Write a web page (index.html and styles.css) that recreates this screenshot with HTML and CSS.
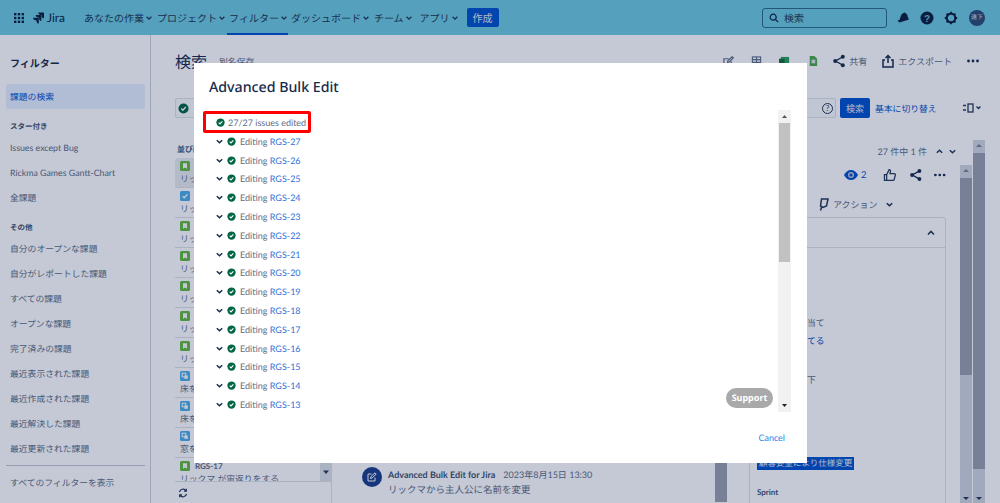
FILE: index.html
```html
<!DOCTYPE html>
<html lang="ja">
<head>
  <meta charset="UTF-8" />
  <title>検索 - Jira</title>
  <link rel="stylesheet" href="styles.css">
</head>
<body>
  <svg class="sprite" aria-hidden="true">
    <symbol id="ok" viewBox="0 0 12 12">
      <circle cx="6" cy="6" r="5.5" fill="#006644"/>
      <path d="M3.6 6.1l1.7 1.7 3.2-3.4" fill="none" stroke="#fff" stroke-width="1.5"/>
    </symbol>
    <symbol id="down" viewBox="0 0 10 10">
      <path d="M2 3.5l3 3 3-3" fill="none" stroke="currentColor" stroke-width="1.6"/>
    </symbol>
    <symbol id="up" viewBox="0 0 10 10">
      <path d="M2 6.5l3-3 3 3" fill="none" stroke="currentColor" stroke-width="1.6"/>
    </symbol>
    <symbol id="story" viewBox="0 0 10 10">
      <rect width="10" height="10" rx="1.5" fill="#63ba3c"/>
      <path d="M3 2.2h4v5.6L5 6.4 3 7.8z" fill="#fff"/>
    </symbol>
    <symbol id="task" viewBox="0 0 10 10">
      <rect width="10" height="10" rx="1.5" fill="#4bade8"/>
      <path d="M2.6 5.2l1.7 1.6 3.1-3.4" fill="none" stroke="#fff" stroke-width="1.4"/>
    </symbol>
    <symbol id="sub" viewBox="0 0 10 10">
      <rect width="10" height="10" rx="1.5" fill="#4bade8"/>
      <rect x="2.2" y="2.2" width="3.6" height="3.6" fill="none" stroke="#fff" stroke-width="1"/>
      <rect x="4.4" y="4.4" width="3.4" height="3.4" fill="#fff"/>
    </symbol>
    <symbol id="share" viewBox="0 0 14 14">
      <path d="M10.5 3L3.5 7l7 4" fill="none" stroke="currentColor" stroke-width="1.4"/>
      <circle cx="10.8" cy="2.8" r="2" fill="currentColor"/>
      <circle cx="3.2" cy="7" r="2" fill="currentColor"/>
      <circle cx="10.8" cy="11.2" r="2" fill="currentColor"/>
    </symbol>
    <symbol id="more" viewBox="0 0 14 14">
      <circle cx="2.5" cy="7" r="1.4" fill="currentColor"/>
      <circle cx="7" cy="7" r="1.4" fill="currentColor"/>
      <circle cx="11.5" cy="7" r="1.4" fill="currentColor"/>
    </symbol>
  </svg>

  <header class="nav">
    <svg class="nav-grid" width="10" height="10" viewBox="0 0 10 10" fill="#0b1f3f">
      <rect width="2.4" height="2.4"/><rect x="3.8" width="2.4" height="2.4"/><rect x="7.6" width="2.4" height="2.4"/>
      <rect y="3.8" width="2.4" height="2.4"/><rect x="3.8" y="3.8" width="2.4" height="2.4"/><rect x="7.6" y="3.8" width="2.4" height="2.4"/>
      <rect y="7.6" width="2.4" height="2.4"/><rect x="3.8" y="7.6" width="2.4" height="2.4"/><rect x="7.6" y="7.6" width="2.4" height="2.4"/>
    </svg>
    <div class="logo">
      <svg width="12" height="12" viewBox="0 0 12 12" fill="#0b1f3f">
        <path d="M11.5.5H6.3c0 1.4 1.1 2.4 2.4 2.4h1v1c0 1.3 1 2.4 2.3 2.4V.9z"/>
        <path d="M8.9 3.1H3.7c0 1.4 1.1 2.4 2.4 2.4h1v1c0 1.3 1 2.4 2.3 2.4V3.5z"/>
        <path d="M6.3 5.8H1.1c0 1.4 1.1 2.4 2.4 2.4h1v1c0 1.3 1 2.4 2.3 2.4V6.2z"/>
      </svg>
      <span>Jira</span>
    </div>
    <nav class="menu">
      <a>あなたの作業<svg><use href="#down"/></svg></a>
      <a>プロジェクト<svg><use href="#down"/></svg></a>
      <a class="current">フィルター<svg><use href="#down"/></svg></a>
      <a>ダッシュボード<svg><use href="#down"/></svg></a>
      <a>チーム<svg><use href="#down"/></svg></a>
      <a>アプリ<svg><use href="#down"/></svg></a>
    </nav>
    <button class="create">作成</button>
    <div class="nav-right">
      <div class="global-search">
        <svg width="10" height="10" viewBox="0 0 10 10" fill="none" stroke="#0b1f3f" stroke-width="1.2"><circle cx="4.2" cy="4.2" r="3"/><path d="M6.5 6.5L9.2 9.2"/></svg>
        <span>検索</span>
      </div>
      <svg class="nav-icon" viewBox="0 0 14 14" fill="#0b1f3f"><path d="M8.5 1.5c2 .8 3.2 2.3 3.2 4.3l1.3 2.7-9.5 3L1.5 9.8l2.3-1.4C4.5 5.5 5.500 2.200 8.500 1.500z"/></svg>
      <svg class="nav-icon" viewBox="0 0 14 14"><circle cx="7" cy="7" r="6.5" fill="#0b1f3f"/><text x="7" y="10.5" text-anchor="middle" font-family="Liberation Sans" font-weight="bold" font-size="10" fill="#6fb0c6">?</text></svg>
      <svg class="nav-icon" viewBox="0 0 14 14" fill="none" stroke="#0b1f3f"><circle cx="7" cy="7" r="4.3" stroke-width="2.2"/><path d="M7 .8v2M7 11.2v2M.8 7h2M11.2 7h2M2.6 2.6L4 4M10 10l1.4 1.4M2.6 11.4L4 10M10 4l1.4-1.4" stroke-width="1.8"/></svg>
      <div class="avatar">遠下</div>
    </div>
  </header>

  <div class="page">
    <aside class="side">
      <h3 class="side-title">フィルター</h3>
      <a class="side-item selected">課題の検索</a>
      <h4 class="side-head">スター付き</h4>
      <a class="side-item">Issues except Bug</a>
      <a class="side-item">Rickma Games Gantt-Chart</a>
      <a class="side-item">全課題</a>
      <h4 class="side-head other">その他</h4>
      <a class="side-item">自分のオープンな課題</a>
      <a class="side-item">自分がレポートした課題</a>
      <a class="side-item">すべての課題</a>
      <a class="side-item">オープンな課題</a>
      <a class="side-item">完了済みの課題</a>
      <a class="side-item">最近表示された課題</a>
      <a class="side-item">最近作成された課題</a>
      <a class="side-item">最近解決した課題</a>
      <a class="side-item">最近更新された課題</a>
      <div class="side-rule"></div>
      <a class="side-item">すべてのフィルターを表示</a>
    </aside>

    <main class="main">
      <div class="title-row">
        <h1>検索</h1>
        <span class="save-as">別名保存</span>
        <div class="tools">
          <svg class="tool-icon" viewBox="0 0 12 12" fill="none" stroke="#5e6c84" stroke-width="1.3"><path d="M9 6v5H1V3h5M5 7l.4-2L10 .8 11.2 2 7 6.5z"/></svg>
          <svg class="tool-icon" viewBox="0 0 12 12" fill="none" stroke="#5e6c84" stroke-width="1.2"><rect x="1.5" y="1" width="9" height="10"/><path d="M1.5 4h9M1.5 7h9M6 1v10"/></svg>
          <svg class="tool-icon" viewBox="0 0 12 12"><rect x="2" y="1" width="9" height="10" fill="#2e9e5b"/><rect x="0" y="3" width="6" height="6" fill="#146c3a"/></svg>
          <svg class="tool-icon" viewBox="0 0 12 12"><path d="M3 0h5l3 3v8H3z" fill="#4aa84a"/><rect x="5" y="4" width="4" height="4" fill="#dfe6ee"/></svg>
          <span class="tool"><svg><use href="#share"/></svg>共有</span>
          <span class="tool"><svg viewBox="0 0 14 14" fill="none" stroke="currentColor" stroke-width="1.5"><path d="M4 6H2v7h10V6h-2M7 9V1.5M4.5 4L7 1.5 9.5 4"/></svg>エクスポート</span>
          <svg class="tool-more"><use href="#more"/></svg>
        </div>
      </div>

      <div class="search-row">
        <div class="jql">
          <svg width="11" height="11"><use href="#ok"/></svg>
          <span class="jql-help">?</span>
        </div>
        <button class="search-btn">検索</button>
        <a class="switch">基本に切り替え</a>
        <svg class="layout" width="20" height="10" viewBox="0 0 20 10" fill="none" stroke="#253858" stroke-width="1.3"><path d="M0 2.5h3M0 7h3"/><rect x="5" y="1" width="5" height="8"/><path d="M13.5 3.5l2 2 2-2"/></svg>
      </div>

      <div class="content">
        <section class="list">
          <div class="sort">並び順</div>
          <div class="issues">
            <div class="issue active"><svg><use href="#story"/></svg><p>リックマ</p></div>
            <div class="issue"><svg><use href="#task"/></svg><p>リックマ</p></div>
            <div class="issue"><svg><use href="#story"/></svg><p>リックマ</p></div>
            <div class="issue"><svg><use href="#story"/></svg><p>リックマ</p></div>
            <div class="issue"><svg><use href="#story"/></svg><p>リックマ</p></div>
            <div class="issue"><svg><use href="#story"/></svg><p>リックマ</p></div>
            <div class="issue"><svg><use href="#story"/></svg><p>リックマ</p></div>
            <div class="issue"><svg><use href="#sub"/></svg><p>床を</p></div>
            <div class="issue"><svg><use href="#sub"/></svg><p>床を</p></div>
            <div class="issue"><svg><use href="#sub"/></svg><p>窓を</p></div>
            <div class="issue"><svg><use href="#story"/></svg><b>RGS-17</b><p>リックマ が宙返りをする</p></div>
            <div class="list-scroll">
              <svg width="8" height="6" viewBox="0 0 8 6"><path d="M1 1.5h6L4 5z" fill="#253858"/></svg>
            </div>
          </div>
          <div class="list-foot">
            <svg width="10" height="10" viewBox="0 0 10 10" fill="none" stroke="#253858" stroke-width="1.2"><path d="M1.5 4A3.6 3.6 0 0 1 8 2.8M8.5 6A3.6 3.6 0 0 1 2 7.2M8.3 .8v2.4H6M1.7 9.2V6.8H4"/></svg>
          </div>
        </section>

        <section class="activity">
          <div class="comment">
            <div class="comment-avatar">
              <svg width="10" height="10" viewBox="0 0 10 10" fill="none" stroke="#fff" stroke-width="1"><path d="M8 5.5V9H1V2h3.5M3.5 6.500l.4-1.900L8 .8l1.200 1.200L5.200 6z"/></svg>
            </div>
            <div>
              <div class="comment-meta"><b>Advanced Bulk Edit for Jira</b><span>2023年8月15日 13:30</span></div>
              <div class="comment-text">リックマから主人公に名前を変更</div>
            </div>
          </div>
          <div class="mid-scroll"></div>
        </section>

        <section class="detail">
          <div class="pager">27 件中 1 件<svg><use href="#up"/></svg><svg><use href="#down"/></svg></div>
          <div class="actions">
            <span class="watch">
              <svg width="14" height="10" viewBox="0 0 14 10"><path d="M0 5c1.5-3 4-5 7-5s5.500 2 7 5c-1.500 3-4 5-7 5S1.500 8 0 5z" fill="#0052cc"/><circle cx="7" cy="5" r="3" fill="#c3c8d4"/><circle cx="7" cy="5" r="1.6" fill="#0052cc"/></svg>
              2
            </span>
            <svg class="act thumb" viewBox="0 0 14 14" fill="none" stroke="#253858" stroke-width="1.3"><path d="M1.5 6.5h2.3v6H1.5zM3.8 6.8l2.5-5.300c1.200 0 1.700.9 1.400 2L7.200 5.500h4.600c.8 0 1.200.7 1 1.400l-1.100 4.500c-.2.700-.6 1.100-1.300 1.100H3.800"/></svg>
            <svg class="act"><use href="#share"/></svg>
            <svg class="act dots"><use href="#more"/></svg>
          </div>
          <div class="action-row">
            <svg width="11" height="13" viewBox="0 0 11 13" fill="none" stroke="#253858" stroke-width="1.5"><path d="M3.5 1H10L8.5 8 5 9.5 2.500 8zM3.500 9.500L2.500 12.500"/></svg>
            <span>アクション</span>
            <svg class="chev"><use href="#down"/></svg>
          </div>
          <div class="panel">
            <div class="panel-head"><svg><use href="#up"/></svg></div>
            <div class="panel-body">
              <p class="line-a">当て</p>
              <p class="line-b">てる</p>
              <p class="line-c">下</p>
              <span class="tag">顧客要望により仕様変更</span>
              <h5>Sprint</h5>
            </div>
          </div>
        </section>

        <div class="scroll panel-scroll"><span class="scroll-thumb"></span></div>
        <div class="scroll page-scroll"><span class="scroll-thumb"></span></div>
      </div>
    </main>
  </div>

  <div class="overlay"></div>

  <div class="dialog">
    <h2>Advanced Bulk Edit</h2>
    <div class="dialog-body">
      <div class="log">
        <div class="log-total"><svg><use href="#ok"/></svg>27/27 issues edited</div>
        <div class="log-row"><svg class="chev"><use href="#down"/></svg><svg class="ok"><use href="#ok"/></svg>Editing <a>RGS-27</a></div>
        <div class="log-row"><svg class="chev"><use href="#down"/></svg><svg class="ok"><use href="#ok"/></svg>Editing <a>RGS-26</a></div>
        <div class="log-row"><svg class="chev"><use href="#down"/></svg><svg class="ok"><use href="#ok"/></svg>Editing <a>RGS-25</a></div>
        <div class="log-row"><svg class="chev"><use href="#down"/></svg><svg class="ok"><use href="#ok"/></svg>Editing <a>RGS-24</a></div>
        <div class="log-row"><svg class="chev"><use href="#down"/></svg><svg class="ok"><use href="#ok"/></svg>Editing <a>RGS-23</a></div>
        <div class="log-row"><svg class="chev"><use href="#down"/></svg><svg class="ok"><use href="#ok"/></svg>Editing <a>RGS-22</a></div>
        <div class="log-row"><svg class="chev"><use href="#down"/></svg><svg class="ok"><use href="#ok"/></svg>Editing <a>RGS-21</a></div>
        <div class="log-row"><svg class="chev"><use href="#down"/></svg><svg class="ok"><use href="#ok"/></svg>Editing <a>RGS-20</a></div>
        <div class="log-row"><svg class="chev"><use href="#down"/></svg><svg class="ok"><use href="#ok"/></svg>Editing <a>RGS-19</a></div>
        <div class="log-row"><svg class="chev"><use href="#down"/></svg><svg class="ok"><use href="#ok"/></svg>Editing <a>RGS-18</a></div>
        <div class="log-row"><svg class="chev"><use href="#down"/></svg><svg class="ok"><use href="#ok"/></svg>Editing <a>RGS-17</a></div>
        <div class="log-row"><svg class="chev"><use href="#down"/></svg><svg class="ok"><use href="#ok"/></svg>Editing <a>RGS-16</a></div>
        <div class="log-row"><svg class="chev"><use href="#down"/></svg><svg class="ok"><use href="#ok"/></svg>Editing <a>RGS-15</a></div>
        <div class="log-row"><svg class="chev"><use href="#down"/></svg><svg class="ok"><use href="#ok"/></svg>Editing <a>RGS-14</a></div>
        <div class="log-row"><svg class="chev"><use href="#down"/></svg><svg class="ok"><use href="#ok"/></svg>Editing <a>RGS-13</a></div>
      </div>
      <div class="log-scroll">
        <svg width="13" height="13" viewBox="0 0 13 13"><path d="M4 8h5L6.5 5z" fill="#555"/></svg>
        <span class="log-thumb"></span>
        <span class="log-track"></span>
        <svg width="13" height="13" viewBox="0 0 13 13"><path d="M4 5h5L6.5 8z" fill="#222"/></svg>
      </div>
      <span class="highlight"></span>
      <span class="support">Support</span>
    </div>
    <div class="dialog-foot"><a>Cancel</a></div>
  </div>
</body>
</html>
```

FILE: styles.css
```css
* { box-sizing: border-box; }
html, body {
  margin: 0;
  height: 503px;
  overflow: hidden;
}
body {
  position: relative;
  background: #fff;
  color: #5e6c84;
  font-family: Lato, "Noto Sans CJK JP", sans-serif;
  font-size: 8.8px;
  text-rendering: geometricPrecision;
}
h1, h2, h3, h4, h5, p { margin: 0; font-weight: normal; }
.sprite { display: none; }

/* top bar */
.nav {
  display: flex;
  align-items: center;
  height: 35px;
  padding-left: 14px;
  background: #6ecadf;
  color: #1c3550;
  font-size: 10px;
}
.logo {
  display: flex;
  align-items: center;
  gap: 3px;
  margin-left: 8px;
  font-size: 12px;
  color: #0b1f3f;
}
.menu {
  display: flex;
  height: 35px;
  margin-left: 19px;
  gap: 4px;
}
.menu a {
  display: flex;
  align-items: center;
  padding-top: 2px;
  border-bottom: 2px solid transparent;
}
.menu svg { width: 8px; height: 8px; margin-left: 1px; }
.menu .current { border-bottom-color: #0052cc; padding-left: 2px; margin: 0 -1px 0 -3px; }
.menu a:last-child { margin-left: 3px; }
.create {
  flex: none;
  width: 32px;
  height: 19px;
  margin-left: 8px;
  padding: 0;
  border: 0;
  border-radius: 2px;
  background: #0052cc;
  color: #e4e9f2;
  font: 10px "Noto Sans CJK JP", sans-serif;
}
.nav-right {
  display: flex;
  align-items: center;
  margin-left: auto;
  padding-right: 15px;
}
.global-search {
  display: flex;
  align-items: center;
  gap: 5px;
  width: 125px;
  height: 20px;
  padding-left: 6px;
  margin-right: 9px;
  border: 1px solid #2c6a84;
  border-radius: 3px;
}
.nav-icon { width: 14px; height: 14px; margin-left: 10px; }
.global-search + .nav-icon { margin-left: 0; }
.avatar {
  width: 16px;
  height: 16px;
  margin-left: 11px;
  border-radius: 50%;
  background: #2c4a75;
  color: #dfe5ee;
  font-size: 6px;
  line-height: 16px;
  text-align: center;
}

.page {
  display: flex;
  height: 468px;
  overflow: hidden;
}

/* left sidebar */
.side {
  flex: none;
  width: 151px;
  padding: 20px 5px 0 6px;
  border-right: 1px solid #ccd1da;
}
.side-title {
  padding-left: 4px;
  height: 29px;
  font-size: 10px;
  font-weight: bold;
  color: #172b4d;
}
.side-item {
  display: flex;
  align-items: center;
  height: 25px;
  padding-left: 4px;
  white-space: nowrap;
}
.side-item.selected {
  background: #e6eeff;
  border-radius: 3px;
  color: #0052cc;
}
.side-head {
  height: 14px;
  margin-top: 12px;
  padding-left: 4px;
  font-size: 7.5px;
  font-weight: bold;
  color: #42526e;
}
.side-rule {
  margin-top: 4px;
  margin-bottom: 4px;
  border-top: 1px solid #c1c7d0;
}

/* main area */
.main {
  flex: 1;
  min-width: 0;
  padding: 13px 0 0 24px;
}
.title-row {
  display: flex;
  align-items: center;
  height: 26px;
}
.title-row h1 {
  font-size: 16px;
  color: #172b4d;
}
.save-as { margin-left: 12px; }
.tools {
  display: flex;
  align-items: center;
  margin-left: auto;
  padding-right: 20px;
  font-size: 9px;
}
.tool { display: flex; align-items: center; gap: 3px; margin-left: 14px; }
.tool svg { width: 14px; height: 14px; color: #172b4d; }
.tool-more { width: 14px; height: 14px; margin-left: 14px; color: #172b4d; }
.tool-icon { width: 11px; height: 11px; margin-left: 17px; }

.search-row {
  display: flex;
  align-items: center;
  height: 20px;
  margin-top: 24px;
}
.jql {
  display: flex;
  align-items: center;
  justify-content: space-between;
  flex: none;
  width: 661px;
  height: 20px;
  padding: 0 2px;
  border: 1px solid #dfe1e6;
  border-radius: 2px;
  background: #fafbfc;
}
.jql-help {
  width: 11px;
  height: 11px;
  border: 1.2px solid #253858;
  border-radius: 50%;
  font-size: 8px;
  line-height: 9px;
  text-align: center;
  color: #253858;
}
.search-btn {
  flex: none;
  width: 30px;
  height: 20px;
  margin-left: 4px;
  padding: 0;
  border: 0;
  border-radius: 2px;
  background: #0052cc;
  color: #e4e9f2;
  font: 9px "Noto Sans CJK JP", sans-serif;
}
.switch { margin-left: 5px; color: #0052cc; white-space: nowrap; }
.layout { margin-left: 26px; }

.content {
  display: flex;
  height: 385px;
  margin-top: 22px;
}

/* issue list */
.list {
  flex: none;
  width: 157px;
}
.sort {
  height: 18px;
  padding-left: 2px;
  font-size: 8px;
  font-weight: bold;
  line-height: 18px;
  color: #42526e;
}
.issues { position: relative; height: 323px; overflow: hidden; }
.issue {
  height: 30px;
  padding: 3px 5px 0;
  border-bottom: 1px solid #dfe1e6;
  white-space: nowrap;
  line-height: 10px;
}
.issue svg { display: inline-block; width: 10px; height: 10px; vertical-align: top; }
.issue b { margin-left: 5px; font-size: 8px; vertical-align: top; }
.issue p { height: 14px; line-height: 14px; margin-top: 1px; overflow: hidden; }
.issue.active { background: #ebecf0; border-radius: 3px; }
.list-scroll {
  position: absolute;
  right: 0;
  bottom: 0;
  display: flex;
  justify-content: center;
  align-items: center;
  width: 12px;
  height: 19px;
  background: #dfe1e6;
}
.list-foot {
  height: 22px;
  padding: 6px 0 0 3px;
  border-top: 1px solid #dfe1e6;
  border-right: 1px solid #dfe1e6;
}

/* activity behind the dialog */
.activity {
  position: relative;
  flex: none;
  width: 395px;
  padding-left: 30px;
}
.comment {
  display: flex;
  gap: 6px;
  margin-top: 328px;
}
.comment-avatar {
  display: flex;
  justify-content: center;
  align-items: center;
  width: 20px;
  height: 20px;
  margin-top: -1px;
  border-radius: 50%;
  background: #1a3f8a;
}
.comment-meta {
  display: flex;
  gap: 8px;
  font-size: 9px;
  line-height: 14px;
}
.comment-meta b { font-weight: bold; color: #42526e; }
.comment-text {
  margin-top: 2px;
  line-height: 14px;
  font-size: 9.5px;
}
.mid-scroll {
  position: absolute;
  right: 0;
  top: 323px;
  width: 12px;
  height: 39px;
  background: #9aa0ae;
}

/* right panel */
.detail {
  flex: none;
  width: 219px;
  padding: 3px 0 0 22px;
}
.pager {
  display: flex;
  align-items: center;
  justify-content: flex-end;
  height: 16px;
  margin-right: -11px;
  font-size: 9px;
}
.pager svg { width: 9px; height: 9px; margin-left: 4px; color: #253858; }
.pager svg:first-of-type { margin-left: 8px; }
.actions {
  display: flex;
  align-items: center;
  height: 14px;
  margin-top: 9px;
}
.watch { display: flex; align-items: center; gap: 3px; margin-left: 95px; color: #0052cc; font-size: 9.5px; }
.act { width: 14px; height: 14px; margin-left: 13px; color: #172b4d; }
.act.thumb { margin-left: 16px; }
.act.dots { margin-left: 10px; }
.action-row {
  display: flex;
  align-items: center;
  gap: 4px;
  height: 16px;
  margin-top: 14px;
  margin-left: 69px;
  font-size: 9px;
}
.action-row span { margin-right: 3px; }
.chev { width: 9px; height: 9px; color: #172b4d; }
.panel {
  height: 300px;
  margin-top: 5px;
  border: 1px solid #dfe1e6;
  border-radius: 3px 3px 0 0;
}
.panel-head {
  display: flex;
  justify-content: flex-end;
  align-items: center;
  height: 30px;
  padding-right: 9px;
  border-bottom: 1px solid #dfe1e6;
}
.panel-head svg { width: 10px; height: 10px; color: #253858; }
.panel-body { padding-left: 7px; }
.panel-body p { position: relative; left: 50px; height: 14px; line-height: 14px; }
.line-a { margin-top: 68px; }
.line-b { margin-top: 4px; color: #0052cc; }
.line-c { margin-top: 25px; }
.tag {
  display: inline-block;
  margin-top: 70px;
  padding: 0 2px;
  background: #0052cc;
  color: #e4e9f2;
  font-size: 8.5px;
  line-height: 13px;
}
.panel-body h5 {
  margin-top: 17px;
  font-size: 8px;
  font-weight: bold;
  color: #42526e;
}

/* scrollbars */
.scroll {
  position: absolute;
  width: 12px;
  background: #d2d6df;
}
.scroll::before, .scroll::after {
  content: "";
  position: absolute;
  left: 3px;
  border: 3px solid transparent;
}
.scroll::before { top: 4px; border-top: 0; border-bottom-color: #7b8190; }
.scroll::after { bottom: 3px; border-bottom: 0; border-top-color: #253858; }
.scroll-thumb {
  display: block;
  width: 100%;
  background: #9aa0ae;
}
.panel-scroll { left: 960px; top: 165px; height: 338px; }
.panel-scroll .scroll-thumb { height: 197px; margin-top: 13px; }
.page-scroll { left: 973px; top: 140px; height: 363px; }
.page-scroll .scroll-thumb { height: 316px; margin-top: 13px; }

/* overlay + dialog */
.overlay {
  position: absolute;
  inset: 0;
  background: rgba(9, 30, 80, 0.24);
}
.dialog {
  position: absolute;
  left: 194px;
  top: 63px;
  width: 613px;
  height: 400px;
  padding: 15px 15px 0;
  background: #fff;
}
.dialog h2 {
  height: 32px;
  font-family: "Noto Sans", sans-serif;
  font-size: 14.2px;
  font-weight: 500;
  line-height: 20px;
  color: #172b4d;
}
.dialog-body {
  position: relative;
  display: flex;
  height: 302px;
}
.log { flex: 1; padding-left: 5px; }
.log-total {
  display: flex;
  align-items: center;
  gap: 3px;
  height: 24px;
  margin-bottom: -2px;
  padding-left: 2px;
  white-space: nowrap;
  font-size: 9px;
}
.log-total svg { width: 9px; height: 9px; }
.log-row {
  display: flex;
  align-items: center;
  height: 18.8px;
  white-space: pre;
  font-size: 9px;
}
.log-row .chev { margin-left: 1px; margin-right: 3px; }
.log-row .ok { width: 9px; height: 9px; margin-right: 4px; }
.log-row a { color: #2f6fd6; }
.log-scroll {
  display: flex;
  flex-direction: column;
  flex: none;
  width: 13px;
  margin-right: 1px;
  background: #f1f1f1;
}
.log-thumb { flex: none; height: 139px; background: #c1c1c1; margin: 0 1px; }
.log-track { flex: 1; }
.highlight {
  position: absolute;
  left: -6px;
  top: 1px;
  width: 108px;
  height: 22px;
  border: 3px solid #f00;
  border-radius: 2px;
}
.support {
  position: absolute;
  left: 517px;
  top: 278px;
  width: 47px;
  height: 20px;
  border-radius: 10px;
  background: #a9a9a9;
  color: #fff;
  font-family: "Noto Sans", sans-serif;
  font-size: 9px;
  font-weight: bold;
  line-height: 20px;
  text-align: center;
}
.dialog-foot {
  display: flex;
  justify-content: flex-end;
  padding: 20px 7px 0 0;
}
.dialog-foot a { color: #2f80ed; font-size: 9px; }
```
